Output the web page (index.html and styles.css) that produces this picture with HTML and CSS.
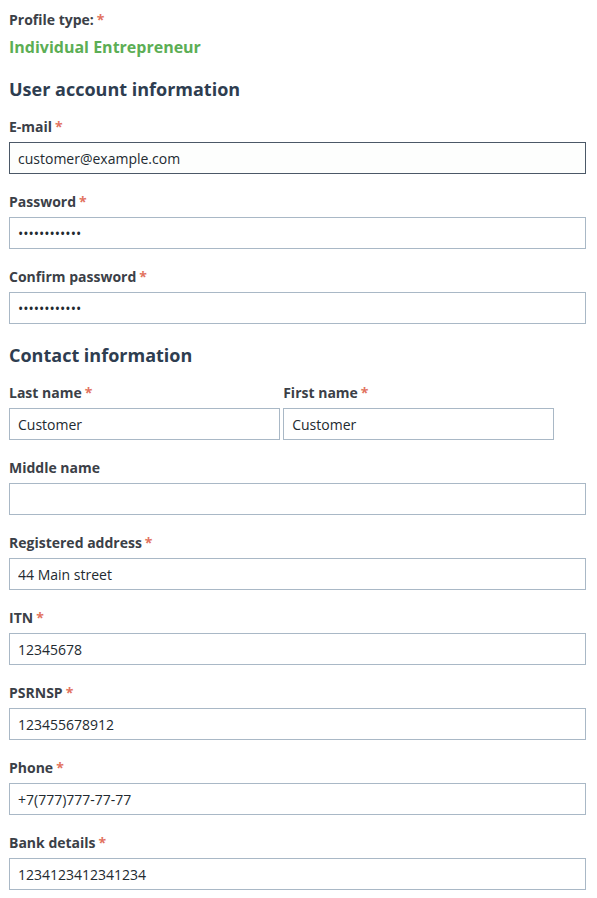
FILE: index.html
```html
<!DOCTYPE html>
<html lang="en">
<head>
<meta charset="utf-8">
<title>Registration</title>
<link rel="stylesheet" href="styles.css">
</head>
<body>
<form class="form">
  <div class="profile">
    <div class="label">Profile type:<span class="req">*</span></div>
    <div class="profile-value">Individual Entrepreneur</div>
  </div>

  <h2 class="section-title">User account information</h2>
  <div class="field">
    <label class="label">E-mail<span class="req">*</span></label>
    <input class="input input-focus" type="text" value="customer@example.com">
  </div>
  <div class="field">
    <label class="label">Password<span class="req">*</span></label>
    <input class="input" type="password" value="password1234">
  </div>
  <div class="field">
    <label class="label">Confirm password<span class="req">*</span></label>
    <input class="input" type="password" value="password1234">
  </div>

  <h2 class="section-title">Contact information</h2>
  <div class="row">
    <div class="field half">
      <label class="label">Last name<span class="req">*</span></label>
      <input class="input" type="text" value="Customer">
    </div>
    <div class="field half">
      <label class="label">First name<span class="req">*</span></label>
      <input class="input" type="text" value="Customer">
    </div>
  </div>
  <div class="field">
    <label class="label">Middle name</label>
    <input class="input" type="text" value="">
  </div>
  <div class="field">
    <label class="label">Registered address<span class="req">*</span></label>
    <input class="input" type="text" value="44 Main street">
  </div>
  <div class="field">
    <label class="label">ITN<span class="req">*</span></label>
    <input class="input" type="text" value="12345678">
  </div>
  <div class="field">
    <label class="label">PSRNSP<span class="req">*</span></label>
    <input class="input" type="text" value="123455678912">
  </div>
  <div class="field">
    <label class="label">Phone<span class="req">*</span></label>
    <input class="input" type="text" value="+7(777)777-77-77">
  </div>
  <div class="field">
    <label class="label">Bank details<span class="req">*</span></label>
    <input class="input" type="text" value="1234123412341234">
  </div>
</form>
</body>
</html>
```
FILE: styles.css
```css
html, body {
  margin: 0;
  padding: 0;
  background: #ffffff;
}
body {
  font-family: "Open Sans", "Liberation Sans", sans-serif;
  color: #333a42;
}
.form {
  padding: 10px 11px 0 9px;
}
.label {
  display: block;
  font-size: 14px;
  font-weight: 700;
  line-height: 20px;
  height: 20px;
  color: #3b4047;
}
.req {
  color: #e2735f;
  margin-left: 3px;
  font-weight: 700;
}
.profile-value {
  margin-top: 7px;
  font-size: 16px;
  font-weight: 700;
  line-height: 20px;
  color: #5cae55;
}
.section-title {
  margin: 0;
  font-size: 18px;
  font-weight: 700;
  line-height: 24px;
  color: #2e3d50;
}
.profile + .section-title {
  margin-top: 20px;
  margin-bottom: 16px;
}
.field + .section-title {
  margin-top: 19px;
  margin-bottom: 16px;
}
.field {
  margin-bottom: 18px;
}
.field .label {
  margin-bottom: 5px;
}
.input {
  display: block;
  box-sizing: border-box;
  width: 100%;
  height: 32px;
  margin: 0;
  padding: 0 8px;
  border: 1px solid #a9b8c6;
  border-radius: 0;
  background: #ffffff;
  font-family: "Open Sans", "Liberation Sans", sans-serif;
  font-size: 14px;
  color: #222a30;
  outline: none;
}
.input-focus {
  border-color: #4b5867;
  background: #fdfefd;
}
.row {
  display: flex;
  gap: 3px;
}
.half {
  width: 47%;
}
```
